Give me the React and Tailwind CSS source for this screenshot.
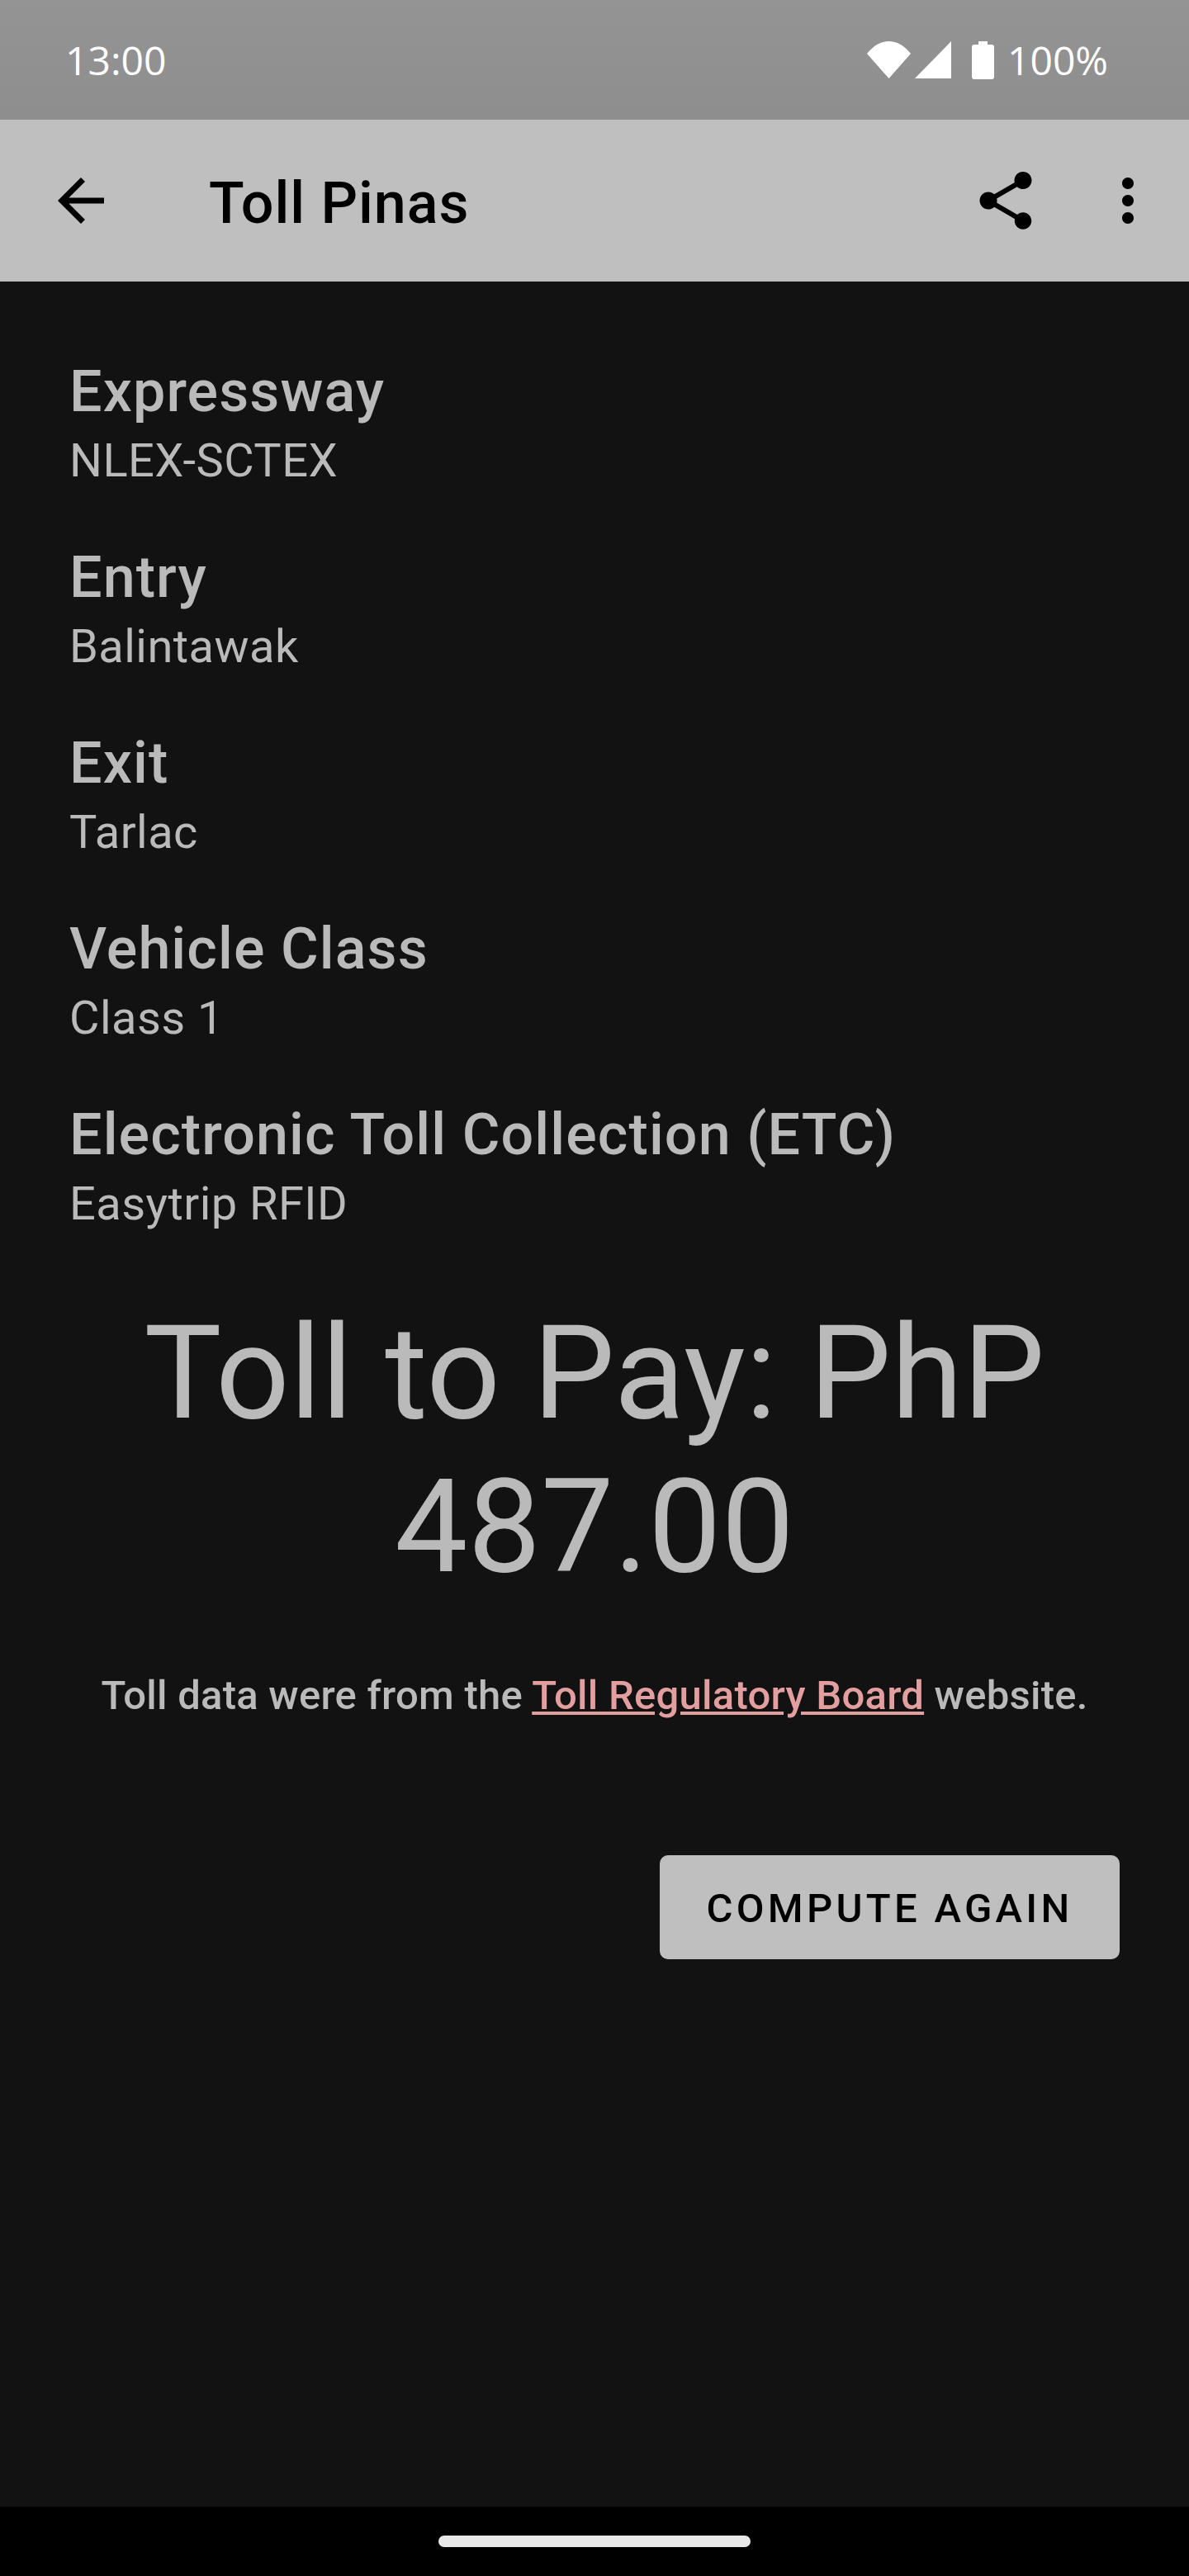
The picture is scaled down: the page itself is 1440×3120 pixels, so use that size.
import React from "react";

const fields = [
  { label: "Expressway", value: "NLEX-SCTEX" },
  { label: "Entry", value: "Balintawak" },
  { label: "Exit", value: "Tarlac" },
  { label: "Vehicle Class", value: "Class 1" },
  { label: "Electronic Toll Collection (ETC)", value: "Easytrip RFID" },
];

const StatusBar = () => (
  <div className="h-[145px] shrink-0 bg-linear-to-b from-[#949494] to-[#8e8e8e] flex items-center justify-between pl-[79px] pr-[98px] text-white font-['Open_Sans',sans-serif] font-medium text-[48px] leading-none">
    <span>13:00</span>
    <div className="flex items-center">
      <svg width="53" height="45" viewBox="0 0 53 45" className="mr-[5px]" fill="#fff">
        <path d="M0 15 C8 5 17 0 26.5 0 C36 0 45 5 53 15 L26.5 45 Z" />
      </svg>
      <svg width="44" height="45" viewBox="0 0 44 45" className="mr-[25px]" fill="#fff">
        <path d="M44 0 V45 H0 Z" />
      </svg>
      <svg width="27" height="46" viewBox="0 0 27 46" className="mr-[16px]" fill="#fff">
        <path d="M8 0 H19 V4 H24 Q27 4 27 7 V43 Q27 46 24 46 H3 Q0 46 0 43 V7 Q0 4 3 4 H8 Z" />
      </svg>
      <span>100%</span>
    </div>
  </div>
);

const AppBar = () => (
  <div className="h-[196px] shrink-0 bg-[#bfbfbf] flex items-center text-black">
    <svg width="84" height="84" viewBox="0 0 24 24" className="ml-[56px]" fill="#000">
      <path d="M20 11H7.83l5.59-5.59L12 4l-8 8 8 8 1.41-1.41L7.83 13H20v-2z" />
    </svg>
    <h1 className="ml-[113px] pt-[5px] flex-1 font-['Roboto',sans-serif] font-medium text-[70px] tracking-[0.95px] leading-none">Toll Pinas</h1>
    <svg width="84" height="84" viewBox="0 0 24 24" className="mr-[64px]" fill="#000">
      <path d="M18 16.08c-.76 0-1.44.3-1.96.77L8.91 12.7c.05-.23.09-.46.09-.7s-.04-.47-.09-.7l7.05-4.11c.54.5 1.25.81 2.04.81 1.66 0 3-1.34 3-3s-1.34-3-3-3-3 1.34-3 3c0 .24.04.47.09.7L8.04 9.81C7.5 9.31 6.79 9 6 9c-1.66 0-3 1.34-3 3s1.34 3 3 3c.79 0 1.5-.31 2.04-.81l7.12 4.16c-.05.21-.08.43-.08.65 0 1.61 1.31 2.92 2.92 2.92 1.61 0 2.92-1.31 2.92-2.92s-1.31-2.92-2.92-2.92z" />
    </svg>
    <svg width="84" height="84" viewBox="0 0 24 24" className="mr-[32px]" fill="#000">
      <path d="M12 8c1.1 0 2-.9 2-2s-.9-2-2-2-2 .9-2 2 .9 2 2 2zm0 2c-1.1 0-2 .9-2 2s.9 2 2 2 2-.9 2-2-.9-2-2-2zm0 6c-1.1 0-2 .9-2 2s.9 2 2 2 2-.9 2-2-.9-2-2-2z" />
    </svg>
  </div>
);

export default function App() {
  return (
    <div className="w-[1440px] h-[3120px] flex flex-col bg-[#121212] font-['Roboto',sans-serif] text-[#bababa]">
      <StatusBar />
      <AppBar />
      <main className="flex-1 flex flex-col px-[84px] pt-[88px]">
        <div className="flex flex-col gap-[57px]">
          {fields.map((f) => (
            <div key={f.label}>
              <div className="font-medium text-[70px] tracking-[1.1px] leading-[91px]">{f.label}</div>
              <div className="text-[56px] tracking-[0.45px] leading-[77px]">{f.value}</div>
            </div>
          ))}
        </div>
        <div className="mt-[73px] text-center text-[157.5px] leading-[186px]">
          Toll to Pay: PhP 487.00
        </div>
        <p className="mt-[83px] text-center text-[49px] tracking-[0.25px] leading-[58px] font-medium whitespace-nowrap">
          Toll data were from the{" "}
          <a className="text-[#e39f9f] underline">Toll Regulatory Board</a> website.
        </p>
        <div className="mt-[164px] flex justify-end">
          <button className="w-[557px] h-[126px] pt-[3px] rounded-[10px] bg-[#bfbfbf] text-black font-medium text-[49px] tracking-[4.3px]">
            COMPUTE AGAIN
          </button>
        </div>
      </main>
      <div className="h-[84px] shrink-0 bg-black flex justify-center pt-[35px]">
        <div className="w-[378px] h-[14px] rounded-full bg-[#e9e9e9]" />
      </div>
    </div>
  );
}
